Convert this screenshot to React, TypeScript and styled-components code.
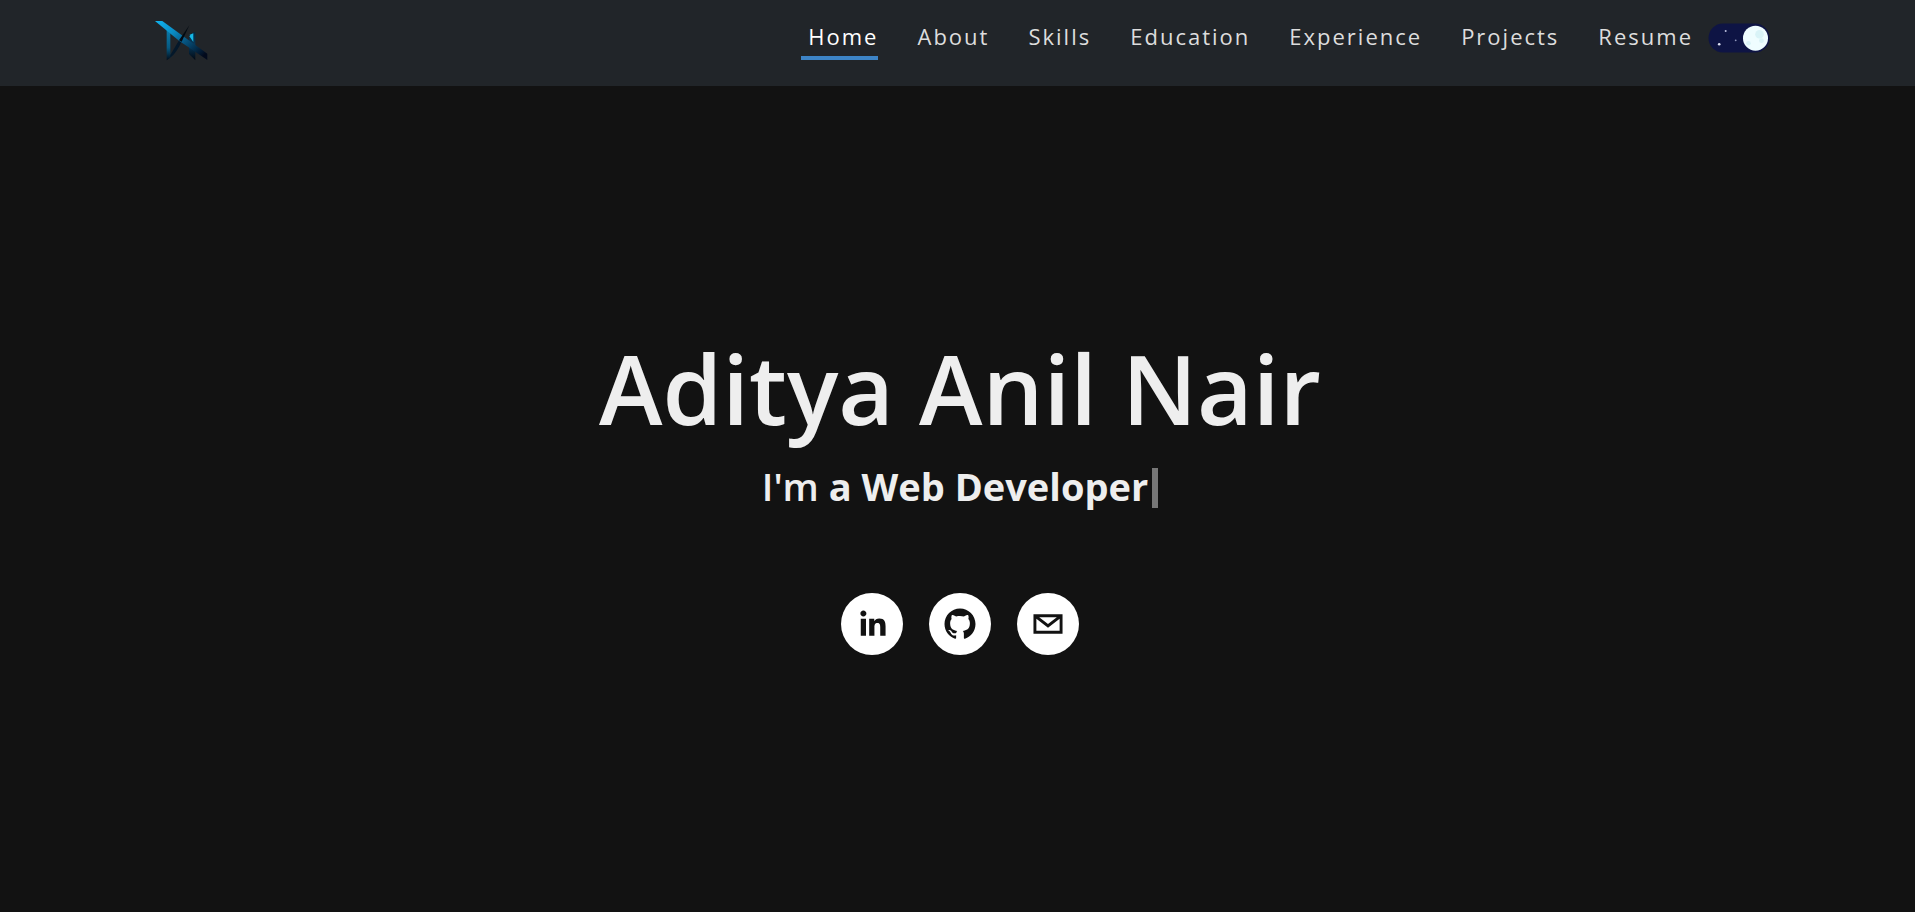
import React, { useState } from 'react';
import styled, { createGlobalStyle } from 'styled-components';

const GlobalStyle = createGlobalStyle`
  *, *::before, *::after { box-sizing: border-box; }
  body {
    margin: 0;
    background: #121212;
    color: #eeeeee;
    font-family: 'Segoe UI', 'Open Sans', 'Noto Sans', sans-serif;
  }
`;

const Page = styled.div`
  display: flex;
  flex-direction: column;
  min-height: 100vh;
`;

const Navbar = styled.header`
  display: flex;
  align-items: flex-start;
  justify-content: space-between;
  height: 86px;
  padding: 20px 145px 0 155px;
  background: #212529;
`;

const LogoLink = styled.a`
  display: block;
  svg { display: block; }
`;

const NavRight = styled.nav`
  display: flex;
  align-items: flex-start;
`;

const NavList = styled.ul`
  display: flex;
  gap: 32px;
  margin: 0;
  padding: 0;
  list-style: none;
`;

const NavLink = styled.a<{ $active?: boolean }>`
  display: block;
  height: 40px;
  padding: 0 0 0 7px;
  border-bottom: 4px solid ${(p) => (p.$active ? '#3d84c6' : 'transparent')};
  color: ${(p) => (p.$active ? '#ffffff' : '#dddddd')};
  font-size: 22px;
  line-height: 32px;
  letter-spacing: 2px;
  text-decoration: none;
`;

const ThemeSwitch = styled.label`
  position: relative;
  display: block;
  width: 62px;
  height: 30px;
  margin: 3px 0 0 15px;
  cursor: pointer;
  svg { display: block; }
`;

const SwitchInput = styled.input`
  position: absolute;
  inset: 0;
  width: 100%;
  height: 100%;
  margin: 0;
  opacity: 0;
  cursor: pointer;
`;

const Hero = styled.main`
  flex: 1;
  display: flex;
  flex-direction: column;
  align-items: center;
  padding: 227px 0 0 5px;
`;

const Name = styled.h1`
  margin: 0;
  font-size: 96px;
  font-weight: 600;
  line-height: 150px;
`;

const Tagline = styled.h2`
  display: flex;
  align-items: center;
  margin: 0;
  font-size: 38px;
  font-weight: 600;
  line-height: 46px;
  white-space: pre;

  strong { font-weight: 700; }
`;

const Caret = styled.span`
  width: 6px;
  height: 40px;
  margin: 4px 0 0 4px;
  background: #777777;
`;

const SocialRow = styled.div`
  display: flex;
  gap: 26px;
  margin-top: 84px;
`;

const SocialLink = styled.a`
  display: block;
  width: 62px;
  height: 62px;
  border-radius: 50%;
  background: #ffffff;
  color: #121212;
  svg { display: block; }
`;

const links = ['Home', 'About', 'Skills', 'Education', 'Experience', 'Projects', 'Resume'];

const socials = [
  {
    name: 'LinkedIn',
    href: '#linkedin',
    path: 'M20.4,44h5.4V26.6h-5.4V44z M23.1,18c-1.7,0-3.1,1.4-3.1,3.1c0,1.7,1.4,3.1,3.1,3.1 c1.7,0,3.1-1.4,3.1-3.1C26.2,19.4,24.8,18,23.1,18z M39.5,26.2c-2.6,0-4.4,1.4-5.1,2.8h-0.1v-2.4h-5.2V44h5.4v-8.6 c0-2.3,0.4-4.5,3.2-4.5c2.8,0,2.8,2.6,2.8,4.6V44H46v-9.5C46,29.8,45,26.2,39.5,26.2z',
  },
  {
    name: 'GitHub',
    href: '#github',
    path: 'M32,16c-8.8,0-16,7.2-16,16c0,7.1,4.6,13.1,10.9,15.2 c0.8,0.1,1.1-0.3,1.1-0.8c0-0.4,0-1.4,0-2.7c-4.5,1-5.4-2.1-5.4-2.1c-0.7-1.8-1.8-2.3-1.8-2.3c-1.5-1,0.1-1,0.1-1 c1.6,0.1,2.5,1.6,2.5,1.6c1.4,2.4,3.7,1.7,4.7,1.3c0.1-1,0.6-1.7,1-2.1c-3.6-0.4-7.3-1.8-7.3-7.9c0-1.7,0.6-3.2,1.6-4.3 c-0.2-0.4-0.7-2,0.2-4.2c0,0,1.3-0.4,4.4,1.6c1.3-0.4,2.6-0.5,4-0.5c1.4,0,2.7,0.2,4,0.5c3.1-2.1,4.4-1.6,4.4-1.6 c0.9,2.2,0.3,3.8,0.2,4.2c1,1.1,1.6,2.5,1.6,4.3c0,6.1-3.7,7.5-7.3,7.9c0.6,0.5,1.1,1.5,1.1,3c0,2.1,0,3.9,0,4.4 c0,0.4,0.3,0.9,1.1,0.8C43.4,45.1,48,39.1,48,32C48,23.2,40.8,16,32,16z',
  },
  {
    name: 'Email',
    href: '#email',
    path: 'M17,22v20h30V22H17z M41.1,25L32,32.1L22.9,25H41.1z M20,39V26.6l12,9.3l12-9.3V39H20z',
  },
];

function Logo() {
  return (
    <svg width="53" height="41" viewBox="0 0 159 123" aria-hidden="true">
      <defs>
        <linearGradient id="beam" x1="0" y1="0" x2="1" y2="0.8">
          <stop offset="0" stopColor="#10b4f0" />
          <stop offset="0.35" stopColor="#0a8cc4" />
          <stop offset="0.58" stopColor="#065a88" />
          <stop offset="1" stopColor="#020a1c" />
        </linearGradient>
        <linearGradient id="leftLeg" x1="0" y1="0" x2="0" y2="1">
          <stop offset="0" stopColor="#0b7dad" />
          <stop offset="0.6" stopColor="#065a82" />
          <stop offset="1" stopColor="#020b18" />
        </linearGradient>
        <linearGradient id="rightLeg" x1="0" y1="0" x2="0" y2="1">
          <stop offset="0" stopColor="#042840" />
          <stop offset="0.45" stopColor="#08395a" />
          <stop offset="1" stopColor="#020812" />
        </linearGradient>
      </defs>
      <path d="M35 26 L46 34 V105 L66 82 C58 102 48 114 35 121 Z" fill="url(#leftLeg)" />
      <path d="M46 105 L74 58 L80 62 C72 84 60 102 46 112 Z" fill="#04182a" />
      <path d="M102 50 Q106 40 121 35 V121 L102 102 Z" fill="url(#rightLeg)" />
      <path d="M103 49 Q107 42 115 40 V66 Z" fill="#16b8e6" />
      <path d="M0 3 H22 L157 101 V120 L73 63 Z" fill="url(#beam)" />
      <path d="M72 61 L103 16 L80 65 Z" fill="#020a12" />
    </svg>
  );
}

function NightSky({ on }: { on: boolean }) {
  return (
    <svg width="62" height="30" viewBox="0 0 62 30" aria-hidden="true">
      <rect x="0.5" y="0.5" width="61" height="29" rx="14.5" fill="#0e1444" />
      <circle cx="17.7" cy="8" r="1" fill="#b9bedd" />
      <circle cx="11.2" cy="21.3" r="1.3" fill="#dfe3f5" />
      <circle cx="27.7" cy="17.3" r="0.9" fill="#8f95bb" />
      <g transform={on ? undefined : 'translate(-33 0)'}>
        <circle cx="47.5" cy="15.2" r="12.5" fill="#effdff" />
        <circle cx="51.5" cy="11.2" r="4.3" fill="#d9f3f7" />
        <circle cx="53.5" cy="17.7" r="2.4" fill="#d9f3f7" />
        <circle cx="40.5" cy="20.2" r="2.3" fill="#d9f3f7" />
      </g>
    </svg>
  );
}

export default function App() {
  const [dark, setDark] = useState(true);
  return (
    <>
      <GlobalStyle />
      <Page>
        <Navbar>
          <LogoLink href="#home" aria-label="Aditya Anil Nair">
            <Logo />
          </LogoLink>
          <NavRight>
            <NavList>
              {links.map((label, i) => (
                <li key={label}>
                  <NavLink href={`#${label.toLowerCase()}`} $active={i === 0}>
                    {label}
                  </NavLink>
                </li>
              ))}
            </NavList>
            <ThemeSwitch>
              <SwitchInput
                type="checkbox"
                aria-label="Dark mode"
                checked={dark}
                onChange={(e) => setDark(e.target.checked)}
              />
              <NightSky on={dark} />
            </ThemeSwitch>
          </NavRight>
        </Navbar>
        <Hero id="home">
          <Name>Aditya Anil Nair</Name>
          <Tagline>
            <span>I'm </span>
            <strong>a Web Developer</strong>
            <Caret />
          </Tagline>
          <SocialRow>
            {socials.map((s) => (
              <SocialLink key={s.name} href={s.href} aria-label={s.name}>
                <svg width="62" height="62" viewBox="0 0 64 64" aria-hidden="true">
                  <path d={s.path} fill="currentColor" />
                </svg>
              </SocialLink>
            ))}
          </SocialRow>
        </Hero>
      </Page>
    </>
  );
}
